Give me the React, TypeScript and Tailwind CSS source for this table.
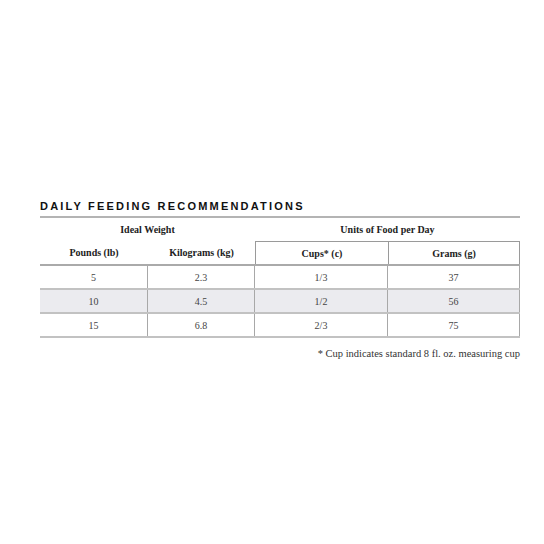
const rows = [
  { lb: '5', kg: '2.3', cups: '1/3', grams: '37', shade: false },
  { lb: '10', kg: '4.5', cups: '1/2', grams: '56', shade: true },
  { lb: '15', kg: '6.8', cups: '2/3', grams: '75', shade: false },
];

export default function App() {
  return (
    <div className="w-[544px] h-[544px] bg-white pt-[199px] font-['Liberation_Serif',serif]">
      <div className="ml-[40px] w-[480px]">
        <h2 className="font-['Liberation_Sans',sans-serif] font-bold text-[11px] leading-[14px] tracking-[0.2em] text-[#111]">
          DAILY FEEDING RECOMMENDATIONS
        </h2>

        <div className="mt-[3px] h-[2px] bg-[#b4b4b4]" />

        {/* group headings */}
        <div className="flex h-[23px] items-center text-[10px] font-bold text-[#222]">
          <div className="w-[215px] text-center">Ideal Weight</div>
          <div className="flex-1 text-center">Units of Food per Day</div>
        </div>

        {/* column headings */}
        <div className="flex h-[23px] items-center text-[10px] font-bold text-[#222]">
          <div className="w-[108px] h-full flex items-center justify-center">Pounds (lb)</div>
          <div className="w-[107px] h-full flex items-center justify-center">Kilograms (kg)</div>
          <div className="w-[133px] h-full flex items-center justify-center border-t border-l border-[#9a9a9a]">Cups* (c)</div>
          <div className="flex-1 h-full flex items-center justify-center border-t border-l border-r border-[#9a9a9a]">Grams (g)</div>
        </div>
        <div className="h-[2px] bg-[#aaaaaa]" />

        {rows.map((r) => (
          <div
            key={r.lb}
            className={`flex h-[24px] items-center text-[10px] text-[#444] border-b-2 border-[#c2c2c2] ${r.shade ? 'bg-[#ebebef]' : ''}`}
          >
            <div className="w-[108px] h-full flex items-center justify-center border-r border-[#a8a8a8]">{r.lb}</div>
            <div className="w-[107px] h-full flex items-center justify-center border-r border-[#a8a8a8]">{r.kg}</div>
            <div className="w-[133px] h-full flex items-center justify-center border-r border-[#a8a8a8]">{r.cups}</div>
            <div className="flex-1 h-full flex items-center justify-center border-r border-[#a8a8a8]">{r.grams}</div>
          </div>
        ))}

        <p className="mt-[8px] text-right text-[10.5px] text-[#333]">
          * Cup indicates standard 8 fl. oz. measuring cup
        </p>
      </div>
    </div>
  );
}
